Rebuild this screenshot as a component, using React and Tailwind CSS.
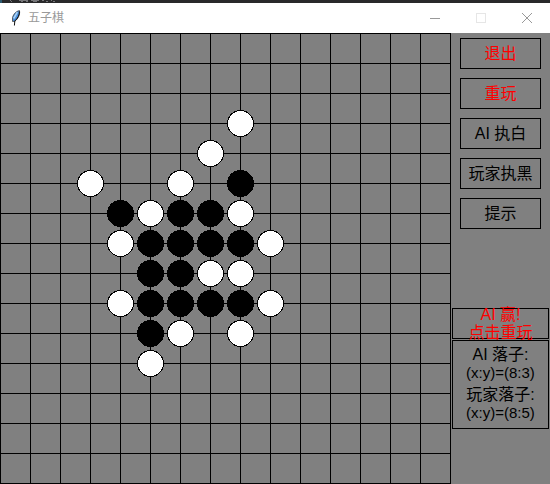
import { useState } from 'react';

const CELL = 30;
const LINES = 16;

// [column, row] of every stone
const WHITE = [
    [8, 3], [7, 4], [3, 5], [6, 5], [5, 6], [8, 6], [4, 7], [9, 7],
    [7, 8], [8, 8], [4, 9], [9, 9], [6, 10], [8, 10], [5, 11],
];
const BLACK = [
    [8, 5], [4, 6], [6, 6], [7, 6], [5, 7], [6, 7], [7, 7], [8, 7],
    [5, 8], [6, 8], [5, 9], [6, 9], [7, 9], [8, 9], [5, 10],
];

function Feather() {
    return (
        <svg width="16" height="16" viewBox="0 0 16 16" className="shrink-0" aria-hidden="true">
            <path d="M11.5 0.6 C8.5 1 5.4 4 4.5 7.5 L4.5 11.5 L6.8 11.3 C9.8 9 12.2 5 11.5 0.6 Z" fill="#4a8fdc" stroke="#444" strokeWidth="0.8" />
            <path d="M9.3 2.2 L5.7 8.5" stroke="#a9d2f5" strokeWidth="1.6" fill="none" />
            <path d="M11.4 1.5 C11.6 5 9.6 8.6 6.8 11 L6.4 15.5" stroke="#111" strokeWidth="1" fill="none" />
        </svg>
    );
}

// Sliver of the editor window that shows above the title bar
function EditorEdge() {
    return (
        <div className="h-[3px] bg-[#29292a]">
            <svg width="60" height="3" className="block" shapeRendering="crispEdges" aria-hidden="true">
                <path d="M0 0h2v3h-2z" fill="#2c5a70" />
                <path d="M10 0.5h1M11 1.5h1M19 0.5h9M21 1.5h2M26 1.5h2M31 0.5h8M33 1.5h4M42 0.5h2M46 1.5h2M51 0.5h1M53 1.5h2" stroke="#77777a" />
            </svg>
        </div>
    );
}

function TitleBar() {
    const control = 'flex h-full w-[46px] items-center justify-center';
    return (
        <header className="flex h-[30px] items-center bg-white pl-2">
            <Feather />
            <h1 className="ml-1 flex-1 text-xs text-[#999999]">五子棋</h1>
            <button className={control} aria-label="最小化">
                <svg width="10" height="10" shapeRendering="crispEdges"><path d="M0 5.5h10" stroke="#999" /></svg>
            </button>
            <button className={control} aria-label="最大化" disabled>
                <svg width="10" height="10" shapeRendering="crispEdges"><rect x="0.5" y="0.5" width="9" height="9" fill="none" stroke="#e6e6e6" /></svg>
            </button>
            <button className={control} aria-label="关闭">
                <svg width="10" height="10"><path d="M0 0L10 10M10 0L0 10" stroke="#999" /></svg>
            </button>
        </header>
    );
}

function Board({ stones }) {
    const size = CELL * (LINES - 1) + 1;
    const marks = Array.from({ length: LINES }, (_, i) => i * CELL + 0.5);

    return (
        <svg width={size} height={size} className="block shrink-0" shapeRendering="crispEdges" role="img" aria-label="棋盘">
            {marks.map((p) => (
                <path key={p} d={`M0 ${p}H${size}M${p} 0V${size}`} stroke="#000" />
            ))}
            {stones.map(({ x, y, color }) => (
                <circle key={`${x}-${y}`} cx={x * CELL + 0.5} cy={y * CELL + 0.5} r="13" fill={color} stroke="#000" />
            ))}
        </svg>
    );
}

function SideButton({ red, children }) {
    return (
        <button className={`h-[31px] border border-black text-base leading-none ${red ? 'text-[#ff0000]' : 'text-black'}`}>
            {children}
        </button>
    );
}

export default function App() {
    const [stones] = useState([
        ...WHITE.map(([x, y]) => ({ x, y, color: '#fff' })),
        ...BLACK.map(([x, y]) => ({ x, y, color: '#000' })),
    ]);

    return (
        <div className="min-h-screen bg-[#808080] font-['Liberation_Sans','Noto_Sans_CJK_SC',sans-serif]">
            <EditorEdge />
            <TitleBar />
            <main className="flex">
                <Board stones={stones} />
                <aside className="flex min-w-0 flex-1 flex-col px-px">
                    <nav className="flex flex-col gap-[9px] px-2 pt-[5px]">
                        <SideButton red>退出</SideButton>
                        <SideButton red>重玩</SideButton>
                        <SideButton>AI 执白</SideButton>
                        <SideButton>玩家执黑</SideButton>
                        <SideButton>提示</SideButton>
                    </nav>
                    <button className="mt-[79px] flex h-[31px] flex-col items-center justify-center border border-black text-base leading-[18px] text-[#ff0000]">
                        <span>AI 赢!</span>
                        <span>点击重玩</span>
                    </button>
                    <dl className="mt-px border border-black pt-[5px] pb-1.5 text-center text-base leading-[18px] text-black">
                        <dt>AI 落子:</dt>
                        <dd className="mb-1 text-[15px]">(x:y)=(8:3)</dd>
                        <dt>玩家落子:</dt>
                        <dd className="text-[15px]">(x:y)=(8:5)</dd>
                    </dl>
                </aside>
            </main>
        </div>
    );
}
